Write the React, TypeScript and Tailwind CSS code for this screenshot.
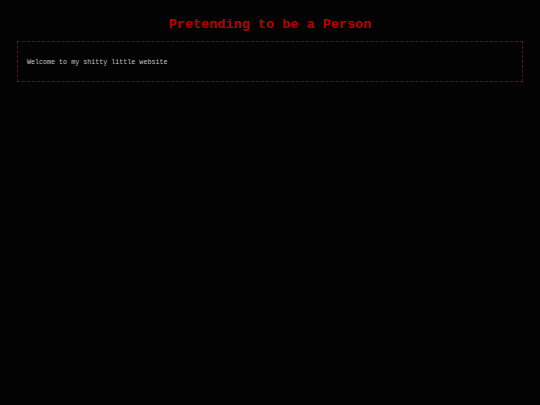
export default function App() {
  return (
    <div className="min-h-[405px] bg-[#030303] px-[17px] pt-[15px] font-['Liberation_Mono',monospace]">
      <h1 className="text-center text-[13.5px] font-bold leading-[19px] text-[#b80000]">
        Pretending to be a Person
      </h1>
      <div className="mt-[7px] border border-dashed border-[#5c1414] px-[9px] pt-[16px] pb-[15px]">
        <p className="text-[6.7px] leading-[8px] text-[#c4c4c4]">Welcome to my shitty little website</p>
      </div>
    </div>
  );
}
